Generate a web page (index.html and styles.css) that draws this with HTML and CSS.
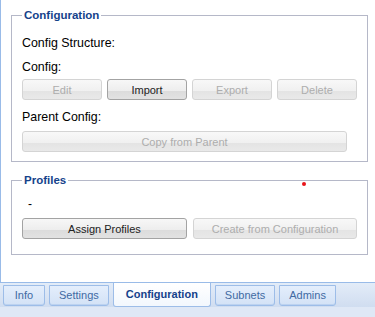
FILE: index.html
```html
<!DOCTYPE html>
<html lang="en">
<head>
    <meta charset="UTF-8">
    <meta name="viewport" content="width=device-width, initial-scale=1.0">
    <title>Configuration</title>
    <link rel="stylesheet" href="styles.css">
</head>
<body>
    <div class="panel">
        <fieldset class="group">
            <legend>Configuration</legend>
            <div class="field-label">Config Structure:</div>
            <div class="field-label">Config:</div>
            <div class="btn-row">
                <button class="btn" disabled>Edit</button>
                <button class="btn">Import</button>
                <button class="btn" disabled>Export</button>
                <button class="btn" disabled>Delete</button>
            </div>
            <div class="field-label parent">Parent Config:</div>
            <button class="btn btn-wide" disabled>Copy from Parent</button>
        </fieldset>

        <fieldset class="group profiles">
            <legend>Profiles</legend>
            <span class="marker"></span>
            <div class="profile-value">-</div>
            <div class="btn-row two">
                <button class="btn">Assign Profiles</button>
                <button class="btn" disabled>Create from Configuration</button>
            </div>
        </fieldset>
    </div>

    <div class="tab-strip">
        <button class="tab">Info</button>
        <button class="tab">Settings</button>
        <button class="tab active">Configuration</button>
        <button class="tab">Subnets</button>
        <button class="tab">Admins</button>
    </div>
    <div class="tab-footer"></div>
</body>
</html>
```

FILE: styles.css
```css
body {
    font-family: "Liberation Sans", Arial, sans-serif;
    font-size: 12px;
    margin: 0;
    background-color: #fff;
    color: #000;
}
.panel {
    height: 282px;
    box-sizing: border-box;
    padding-top: 8px;
    border-left: 1px solid #99bbe8;
}
.group {
    position: relative;
    margin: 0 7px 0 10px;
    padding: 9px 10px 9px;
    border: 1px solid #b5b8c8;
    min-width: 0;
}
.group legend {
    padding: 0 2px;
    font-size: 11.5px;
    font-weight: bold;
    line-height: 14px;
    color: #15428b;
}
.profiles {
    margin-top: 11px;
    padding-top: 5px;
    padding-bottom: 15px;
}
.field-label {
    font-size: 12.4px;
    line-height: 24px;
}
.field-label.parent {
    margin-top: 5px;
}
.profile-value {
    line-height: 24px;
    padding-left: 6px;
}
.marker {
    position: absolute;
    left: 290px;
    top: -5px;
    width: 4px;
    height: 4px;
    border-radius: 50%;
    background-color: #e8141a;
}
.btn-row {
    display: grid;
    grid-template-columns: repeat(4, 80px);
    gap: 5px;
}
.btn-row.two {
    margin-top: 2px;
    grid-template-columns: 165px 164px;
    gap: 6px;
}
.btn {
    height: 21px;
    padding: 0;
    font-family: inherit;
    font-size: 11px;
    color: #222;
    border: 1px solid #a3a3a3;
    border-radius: 3px;
    background: linear-gradient(#f7f7f7, #ededed 58%, #dcdcdc 60%, #e2e2e2);
}
.btn:disabled {
    color: #adadad;
    border-color: #d4d4d4;
    background: linear-gradient(#f8f8f8, #f0f0f0 58%, #e4e4e4 60%, #e9e9e9);
}
.btn-wide {
    display: block;
    width: 325px;
    margin-top: 2px;
}
.tab-strip {
    display: flex;
    align-items: flex-start;
    gap: 4px;
    height: 24px;
    padding-left: 3px;
    border-top: 1px solid #99bbe8;
    background: linear-gradient(#e3ecf8, #d0ddf0);
}
.tab {
    min-width: 42px;
    height: 21px;
    margin-top: 2px;
    padding: 0 9px;
    font-family: inherit;
    font-size: 11px;
    line-height: 19px;
    color: #416aa3;
    border: 1px solid #9dbde8;
    border-radius: 0 0 3px 3px;
    background: linear-gradient(#e4eefc, #d3e2f6);
    box-shadow: inset 0 -1px 0 #bcd2f0;
}
.tab.active {
    height: 24px;
    margin-top: 0;
    padding: 0 12px;
    border-top: none;
    font-weight: bold;
    color: #15428b;
    background: linear-gradient(#fff, #f2f7fd);
    box-shadow: none;
}
.tab-footer {
    height: 11px;
    background-color: #dfe8f6;
}
```
